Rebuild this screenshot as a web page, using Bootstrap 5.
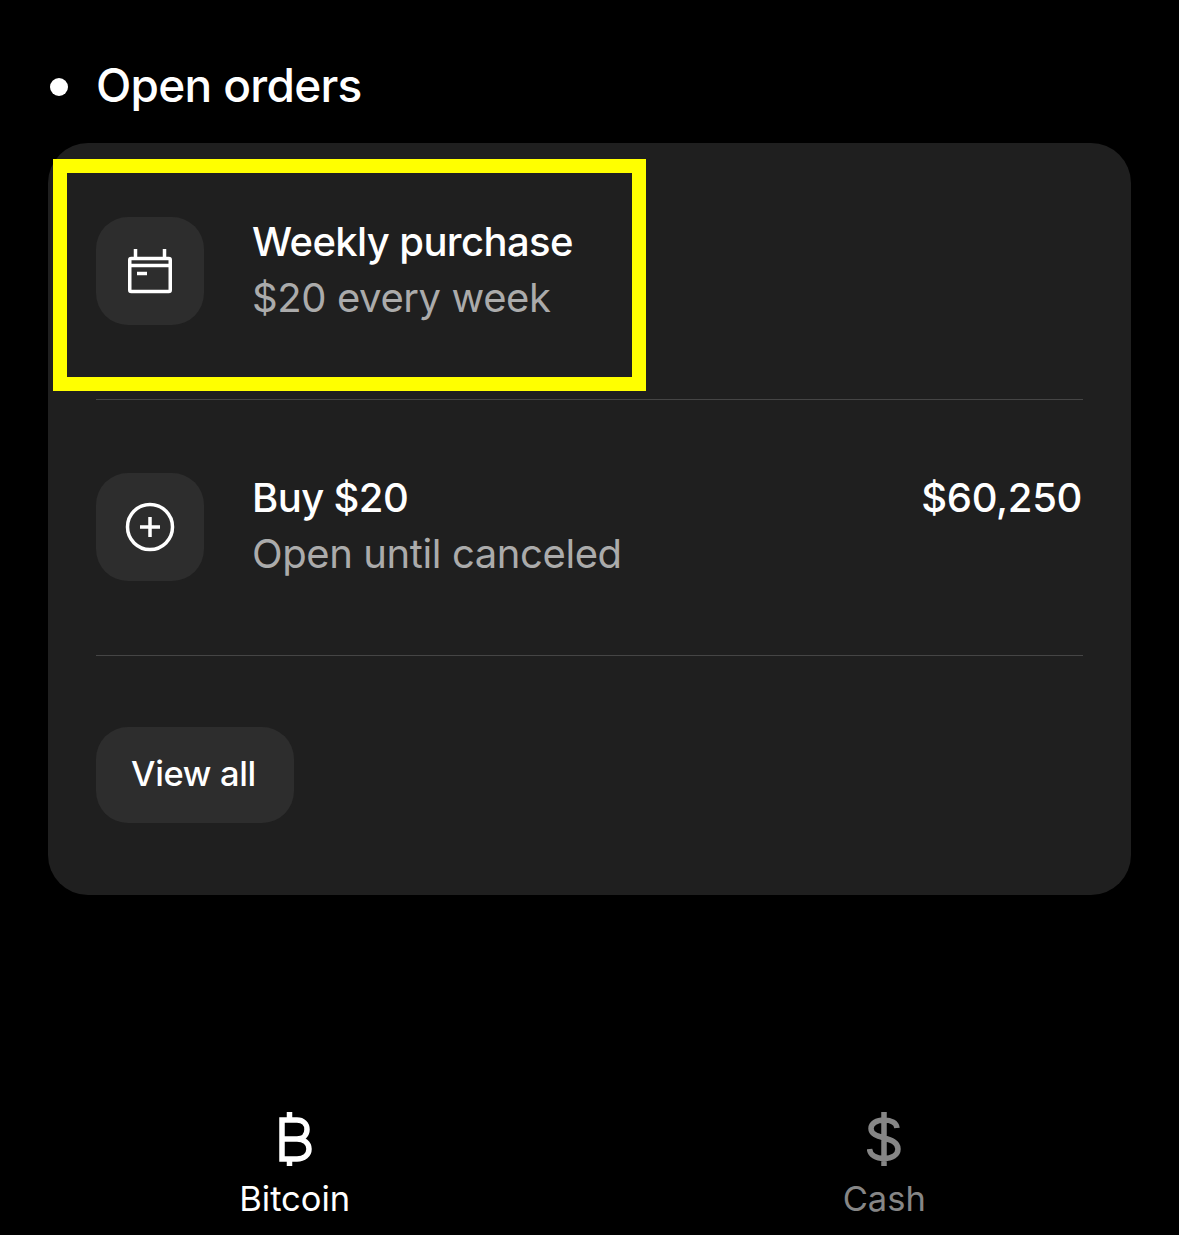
<!DOCTYPE html>
<html lang="en">
<head>
<meta charset="UTF-8">
<meta name="viewport" content="width=device-width, initial-scale=1">
<title>Open orders</title>
<link href="https://cdn.jsdelivr.net/npm/bootstrap@5.3.0/dist/css/bootstrap.min.css" rel="stylesheet">
<style>
body { background: #000; color: #fff; font-family: Inter, "Liberation Sans", sans-serif; }
.screen { width: 1179px; height: 1235px; overflow: hidden; }
.orders-head { height: 143px; padding: 26px 0 0 50px; gap: 28px; font-size: 46px; font-weight: 500; letter-spacing: -.7px; }
.orders-head span { line-height: 56px; }
.head-dot { width: 18px; height: 18px; border-radius: 50%; background: #fff; margin-top: 4px; }
.orders-card { position: relative; margin: 0 48px; height: 752px; padding: 1px 48px 0; background: #1f1f1f; border-radius: 40px; }
.order-row { height: 256px; padding-top: 73px; gap: 48px; border-bottom: 1px solid #454545; }
.order-icon { width: 108px; height: 108px; background: #2d2d2d; border-radius: 32px; }
.order-text { margin-top: -3px; }
.order-title { font-size: 40px; line-height: 56px; font-weight: 500; letter-spacing: -.6px; }
.order-sub { font-size: 40px; line-height: 56px; color: #ababab; letter-spacing: -.4px; }
.order-price { margin: -3px 1px 0 0; letter-spacing: -.35px; }
.view-btn { width: 198px; height: 96px; margin-top: 71px; padding: 0 3px 2px 0; background: #2d2d2d; color: #fff; border: 0; border-radius: 32px; font-size: 34.500px; font-weight: 500; letter-spacing: -.35px; }
.view-btn:hover { background: #2d2d2d; color: #fff; }
.mark-box { position: absolute; left: 5px; top: 16px; width: 593px; height: 232px; border: 14px solid #ffff00; }
.tab-bar { margin-top: 217px; }
.tab-item { color: #fff; font-size: 34.500px; line-height: 40px; }
.tab-item svg { display: block; margin: 0 auto 13px; }
.tab-off { color: #868686; }
</style>
</head>
<body>
<div class="screen">
  <div class="orders-head d-flex align-items-center">
    <div class="head-dot"></div>
    <span>Open orders</span>
  </div>

  <div class="orders-card">
    <div class="mark-box"></div>

    <div class="order-row d-flex align-items-start">
      <div class="order-icon d-flex align-items-center justify-content-center">
        <svg width="46" height="46" viewBox="0 0 46 46" fill="none" stroke="#fff" stroke-width="3.500">
          <rect x="2.750" y="10.500" width="40.500" height="33" rx="1.500"/>
          <path d="M2.750 17.500h40.500M8.500 1v9.500M37.500 1v9.500"/>
          <path d="M10 25.500h10"/>
        </svg>
      </div>
      <div class="order-text">
        <div class="order-title">Weekly purchase</div>
        <div class="order-sub">$20 every week</div>
      </div>
    </div>

    <div class="order-row d-flex align-items-start">
      <div class="order-icon d-flex align-items-center justify-content-center">
        <svg width="50" height="50" viewBox="0 0 50 50" fill="none" stroke="#fff" stroke-width="3.500">
          <circle cx="25" cy="25" r="22.500"/>
          <path d="M15 25h20M25 15v20"/>
        </svg>
      </div>
      <div class="order-text flex-grow-1">
        <div class="order-title">Buy $20</div>
        <div class="order-sub">Open until canceled</div>
      </div>
      <div class="order-title order-price">$60,250</div>
    </div>

    <button class="btn view-btn" type="button">View all</button>
  </div>

  <div class="row g-0 tab-bar text-center">
    <div class="col-6 tab-item">
      <svg width="34" height="54" viewBox="0 0 34 54" fill="none" stroke="currentColor" stroke-width="5.500">
        <path d="M4 8h15c6 0 10 4 10 9.500s-4 9.500-10 9.500H4M19 27c7 0 12 4 12 10s-5 10-12 10H4M4 5.300v44.400M11.500 0v8M11.500 47v7"/>
      </svg>
      <div>Bitcoin</div>
    </div>
    <div class="col-6 tab-item tab-off">
      <svg width="34" height="54" viewBox="0 0 34 54" fill="none" stroke="currentColor" stroke-width="5.500">
        <path d="M30 16c-.5-5-5.500-8-13-8S4 11.500 4 16.500c0 12 27 7 27 20.500 0 6-6 9.500-14 9.500S3 43 2.500 37M17 0v54"/>
      </svg>
      <div>Cash</div>
    </div>
  </div>
</div>
<script src="https://cdn.jsdelivr.net/npm/bootstrap@5.3.0/dist/js/bootstrap.bundle.min.js"></script>
</body>
</html>
